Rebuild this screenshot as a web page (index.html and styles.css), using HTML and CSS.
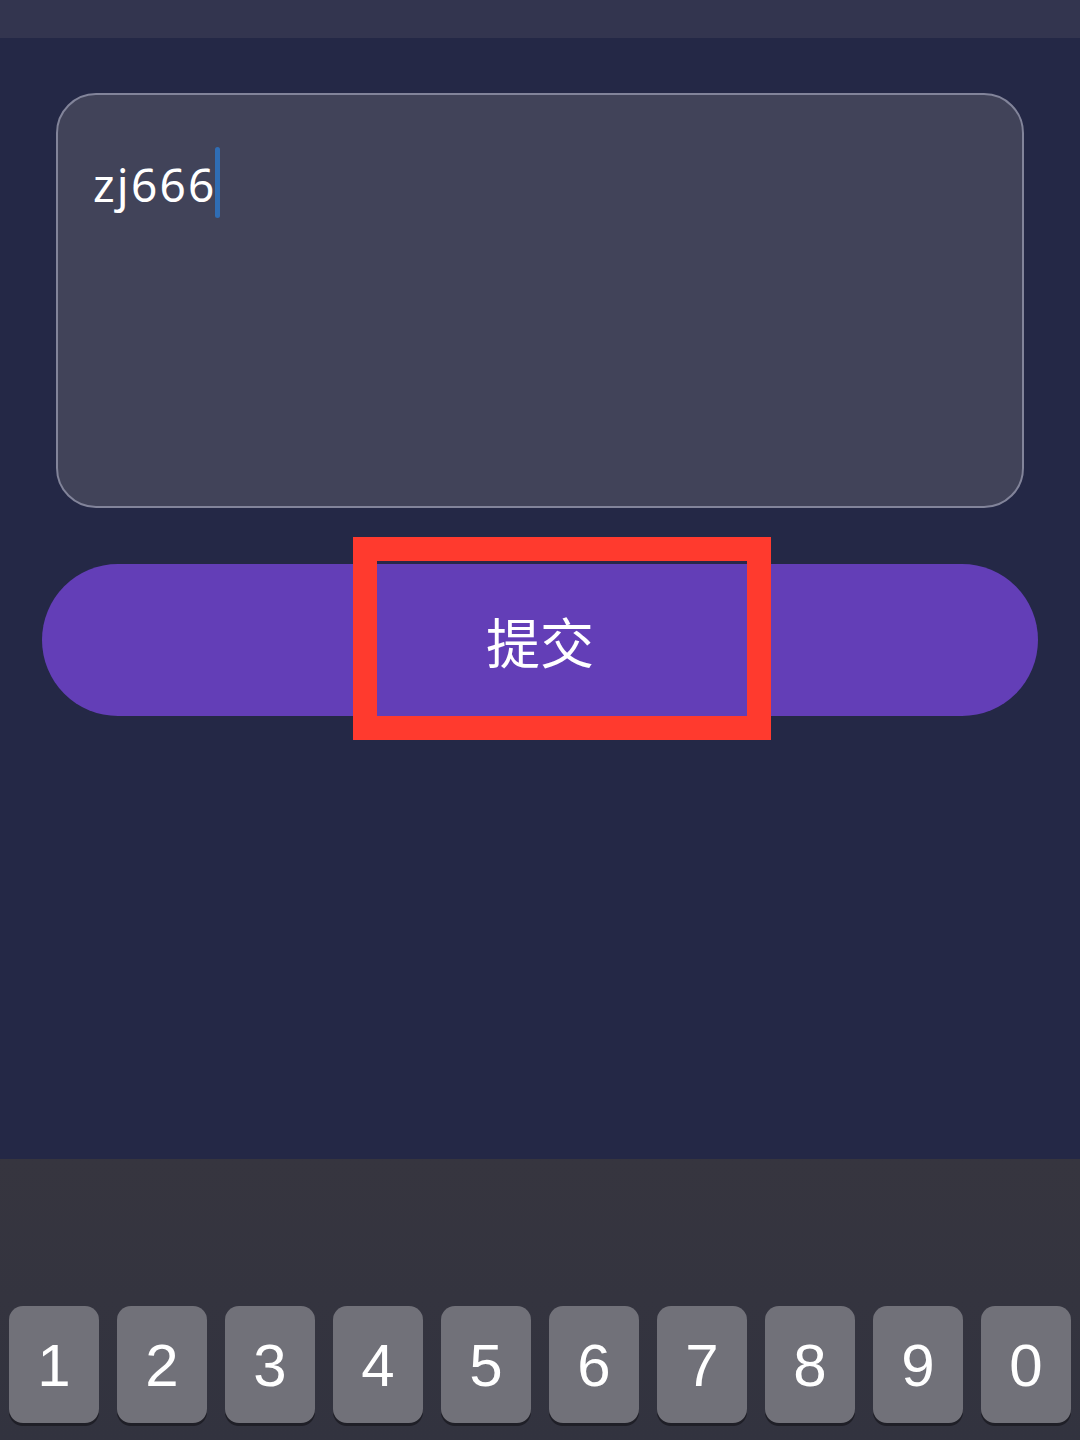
FILE: index.html
```html
<!DOCTYPE html>
<html lang="zh">
<head>
<meta charset="utf-8">
<link rel="stylesheet" href="styles.css">
</head>
<body>
<div class="screen">
  <div class="topbar"></div>
  <div class="content">
    <div class="input-box">
      <span class="input-text">zj666</span><span class="cursor"></span>
    </div>
    <div class="btn-wrap">
      <div class="submit">提交</div>
      <div class="highlight"></div>
    </div>
  </div>
  <div class="keyboard">
    <div class="keys">
      <div class="key">1</div>
      <div class="key">2</div>
      <div class="key">3</div>
      <div class="key">4</div>
      <div class="key">5</div>
      <div class="key">6</div>
      <div class="key">7</div>
      <div class="key">8</div>
      <div class="key">9</div>
      <div class="key">0</div>
    </div>
  </div>
</div>
</body>
</html>
```

FILE: styles.css
```css
* { box-sizing: border-box; }
html, body { margin: 0; padding: 0; }
body {
  width: 1080px;
  height: 1440px;
  overflow: hidden;
  background: #242846;
  font-family: "Noto Sans", "Liberation Sans", "Noto Sans CJK SC", sans-serif;
}
.screen {
  width: 1080px;
  height: 1440px;
  display: flex;
  flex-direction: column;
}
.topbar {
  height: 38px;
  background: #33354f;
  flex: none;
}
.content {
  flex: 1;
  padding: 55px 0 0 0;
  display: flex;
  flex-direction: column;
}
.input-box {
  margin: 0 56px;
  height: 415px;
  border: 2px solid #82849a;
  border-radius: 40px;
  background: #414359;
  padding: 51px 0 0 35px;
  display: flex;
  align-items: flex-start;
}
.input-text {
  color: #ffffff;
  font-size: 46px;
  line-height: 76px;
  letter-spacing: 2.2px;
}
.cursor {
  display: block;
  width: 5px;
  height: 71px;
  margin-top: 1px;
  margin-left: -1px;
  background: #2f6db4;
  border-radius: 2.5px;
}
.btn-wrap {
  position: relative;
  margin: 56px 42px 0 42px;
  height: 152px;
}
.submit {
  height: 152px;
  border-radius: 76px;
  background: #633eb7;
  color: #ffffff;
  font-family: "Noto Sans CJK SC", sans-serif;
  font-size: 54px;
  display: flex;
  align-items: center;
  justify-content: center;
}
.highlight {
  position: absolute;
  left: 311px;
  top: -27px;
  width: 418px;
  height: 203px;
  border: 24px solid #ff3a2e;
  pointer-events: none;
}
.highlight::before {
  content: "";
  position: absolute;
  left: 0;
  right: 0;
  top: 0;
  height: 3px;
  background: #2a2749;
}
.keyboard {
  height: 281px;
  flex: none;
  background: linear-gradient(#36353f, #32333f);
  padding: 147px 9px 0 9px;
}
.keys {
  display: flex;
  gap: 18px;
}
.key {
  width: 90px;
  height: 117px;
  border-radius: 14px;
  background: #717179;
  box-shadow: 0 3px 0 #1f1f27;
  color: #ffffff;
  font-family: "Liberation Sans", "Noto Sans", sans-serif;
  font-size: 60px;
  display: flex;
  align-items: center;
  justify-content: center;
  padding-top: 2px;
}
```
